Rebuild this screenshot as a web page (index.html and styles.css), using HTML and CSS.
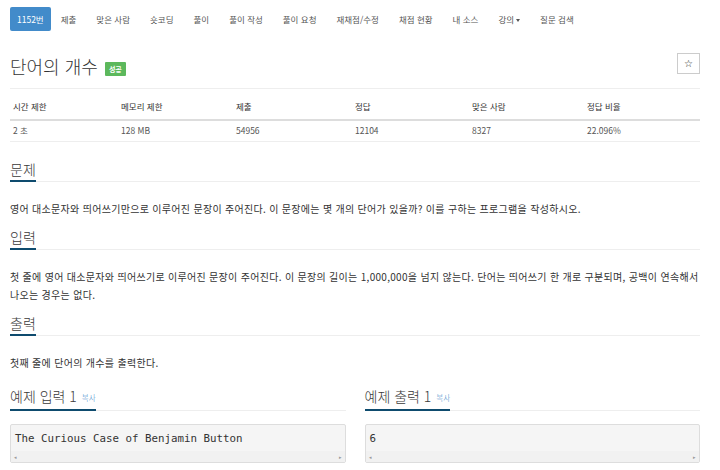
FILE: index.html
```
<!DOCTYPE html>
<html lang="ko">
<head>
<meta charset="utf-8">
<link rel="stylesheet" href="styles.css">
</head>
<body>
<div class="page">
  <ul class="nav">
    <li class="active"><a>1152번</a></li>
    <li><a>제출</a></li>
    <li><a>맞은 사람</a></li>
    <li><a>숏코딩</a></li>
    <li><a>풀이</a></li>
    <li><a>풀이 작성</a></li>
    <li><a>풀이 요청</a></li>
    <li><a>재채점/수정</a></li>
    <li><a>채점 현황</a></li>
    <li><a>내 소스</a></li>
    <li><a>강의<span class="caret"></span></a></li>
    <li><a>질문 검색</a></li>
  </ul>

  <div class="title-row">
    <h1 class="title">단어의 개수 <span class="badge">성공</span></h1>
    <button class="star">☆</button>
  </div>

  <table class="info">
    <thead>
      <tr><th>시간 제한</th><th>메모리 제한</th><th>제출</th><th>정답</th><th>맞은 사람</th><th>정답 비율</th></tr>
    </thead>
    <tbody>
      <tr><td>2 초</td><td>128 MB</td><td>54956</td><td>12104</td><td>8327</td><td>22.096%</td></tr>
    </tbody>
  </table>

  <section class="sec first">
    <h2 class="headline"><span>문제</span></h2>
    <p>영어 대소문자와 띄어쓰기만으로 이루어진 문장이 주어진다. 이 문장에는 몇 개의 단어가 있을까? 이를 구하는 프로그램을 작성하시오.</p>
  </section>

  <section class="sec">
    <h2 class="headline"><span>입력</span></h2>
    <p>첫 줄에 영어 대소문자와 띄어쓰기로 이루어진 문장이 주어진다. 이 문장의 길이는 1,000,000을 넘지 않는다. 단어는 띄어쓰기 한 개로 구분되며, 공백이 연속해서 나오는 경우는 없다.</p>
  </section>

  <section class="sec">
    <h2 class="headline"><span>출력</span></h2>
    <p>첫째 줄에 단어의 개수를 출력한다.</p>
  </section>

  <div class="samples">
    <section class="sample">
      <h2 class="headline"><span>예제 입력 1 <a class="copy">복사</a></span></h2>
      <div class="pre">
        <pre>The Curious Case of Benjamin Button</pre>
        <div class="scroll"><span>◂</span><span>▸</span></div>
      </div>
    </section>
    <section class="sample">
      <h2 class="headline"><span>예제 출력 1 <a class="copy">복사</a></span></h2>
      <div class="pre">
        <pre>6</pre>
        <div class="scroll"><span>◂</span><span>▸</span></div>
      </div>
    </section>
  </div>
</div>
</body>
</html>
```

FILE: styles.css
```
* { box-sizing: border-box; }
html, body { margin: 0; padding: 0; background: #fff; }
body {
  font-family: "Noto Sans CJK KR", "Open Sans", sans-serif;
  color: #333;
  font-size: 9px;
}
.page { width: 690px; margin-left: 10px; }

.nav {
  list-style: none;
  margin: 0;
  padding: 7px 0 0 0;
  display: flex;
  height: 31px;
}
.nav li a {
  display: block;
  height: 24px;
  line-height: 24px;
  padding: 0 10px;
  color: #555;
  font-size: 8.5px;
  border-radius: 2px;
}
.nav li.active a {
  background: #428bca;
  color: #fff;
  padding: 0 7px;
}
.caret {
  display: inline-block;
  width: 0; height: 0;
  margin-left: 2px;
  vertical-align: middle;
  border-top: 3px solid #555;
  border-left: 2.5px solid transparent;
  border-right: 2.5px solid transparent;
}

.title-row {
  display: flex;
  justify-content: space-between;
  align-items: flex-start;
  padding-top: 24px;
  padding-bottom: 11px;
  border-bottom: 1px solid #eee;
}
.title {
  margin: 0;
  font-size: 18px;
  font-weight: 300;
  line-height: 22px;
  color: #333;
}
.badge {
  display: inline-block;
  vertical-align: 2px;
  margin-left: 2px;
  background: #5cb85c;
  color: #fff;
  font-size: 7px;
  font-weight: 700;
  padding: 0 4px;
  height: 14px;
  line-height: 14px;
  border-radius: 1px;
}
.star {
  width: 23px; height: 21px;
  margin-top: -2px;
  padding: 0;
  border: 1px solid #ccc;
  background: #fff;
  color: #222;
  font-size: 10px;
  line-height: 19px;
  font-family: "DejaVu Sans", sans-serif;
}

.info {
  width: 100%;
  border-collapse: collapse;
  margin-top: 7px;
  table-layout: fixed;
}
.info th, .info td {
  text-align: left;
  padding: 0 3px;
  font-size: 8.5px;
}
.info th {
  font-weight: 400;
  height: 24px;
  padding-bottom: 4px;
  border-bottom: 2px solid #ddd;
  color: #333;
}
.info td {
  height: 21px;
  padding-bottom: 2px;
  border-bottom: 1px solid #eee;
  color: #555;
}
.info th:nth-child(1) { width: 108px; }
.info th:nth-child(2) { width: 115px; }
.info th:nth-child(3) { width: 119px; }
.info th:nth-child(4) { width: 117px; }
.info th:nth-child(5) { width: 115px; }

.headline {
  margin: 0;
  font-size: 14px;
  font-weight: 300;
  line-height: 18px;
  border-bottom: 1px solid #eee;
  color: #3a3a3a;
}
.headline span {
  display: inline-block;
  padding-bottom: 2px;
  border-bottom: 2px solid #0e4b6e;
  margin-bottom: -1px;
}
.sec { margin-top: 10px; }
.sec.first { margin-top: 18px; }
.sec p {
  margin: 18px 0 0 0;
  font-size: 10px;
  letter-spacing: 0.3px;
  line-height: 18px;
  color: #333;
}

.samples {
  display: flex;
  gap: 19px;
  margin-top: 15px;
}
.sample { flex: 1; }
.copy {
  font-size: 7.5px;
  color: #428bca;
  vertical-align: 1px;
  margin-left: 1px;
}
.pre {
  margin-top: 13px;
  border: 1px solid #ddd;
  border-radius: 2px;
  background: #f5f5f5;
}
.pre pre {
  margin: 0;
  padding: 6px 4px 4px 4px;
  font-family: "DejaVu Sans Mono", monospace;
  font-size: 10.8px;
  line-height: 16px;
  color: #333;
}
.scroll {
  display: flex;
  justify-content: space-between;
  height: 11px;
  padding: 0 3px;
  font-size: 5px;
  line-height: 11px;
  color: #999;
  background: #f1f1f1;
}
```
